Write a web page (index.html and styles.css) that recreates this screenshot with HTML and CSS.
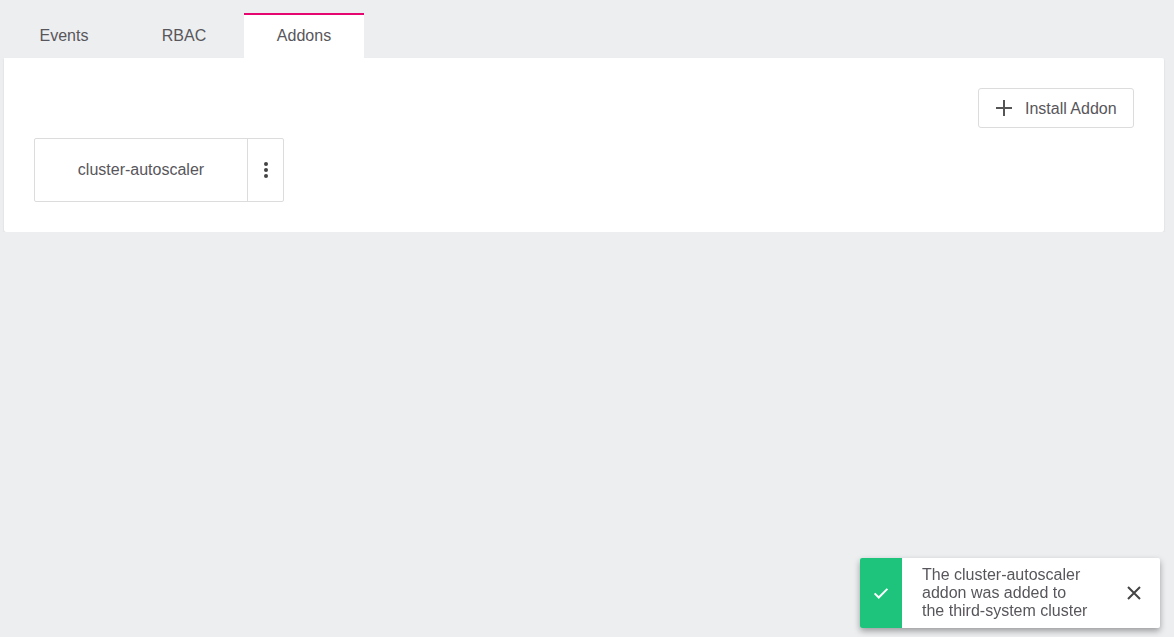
FILE: index.html
```html
<!DOCTYPE html>
<html>
<head>
<meta charset="utf-8">
<link rel="stylesheet" href="styles.css">
</head>
<body>
<div class="page">
  <div class="tabs">
    <div class="tab">Events</div>
    <div class="tab">RBAC</div>
    <div class="tab active">Addons</div>
  </div>
  <div class="card">
    <div class="toolbar">
      <button class="install">
        <svg width="20" height="20" viewBox="0 0 20 20"><path d="M10 2v16M2 10h16" stroke="#555" stroke-width="2" fill="none"/></svg>
        <span>Install Addon</span>
      </button>
    </div>
    <div class="addons">
      <div class="addon">
        <div class="addon-name">cluster-autoscaler</div>
        <div class="addon-menu">
          <svg width="4" height="16" viewBox="0 0 4 16"><circle cx="2" cy="2" r="2" fill="#444"/><circle cx="2" cy="8" r="2" fill="#444"/><circle cx="2" cy="14" r="2" fill="#444"/></svg>
        </div>
      </div>
    </div>
  </div>
</div>
<div class="toast">
  <div class="toast-icon">
    <svg width="18" height="18" viewBox="0 0 24 24"><path d="M3.5 12.5l5.5 5.5 11.5-11.5" stroke="#fff" stroke-width="2.6" fill="none"/></svg>
  </div>
  <div class="toast-text">The cluster-autoscaler addon was added to the third-system cluster</div>
  <div class="toast-close">
    <svg width="14" height="14" viewBox="0 0 14 14"><path d="M1 1l12 12M13 1L1 13" stroke="#444" stroke-width="2" fill="none"/></svg>
  </div>
</div>
</body>
</html>
```
FILE: styles.css
```css
html, body {
  margin: 0;
  padding: 0;
  background: #edeef0;
  font-family: "Liberation Sans", Arial, sans-serif;
  color: #58565b;
}
.page {
  padding: 13px 10px 0 4px;
}
.tabs {
  display: flex;
}
.tab {
  width: 120px;
  height: 45px;
  box-sizing: border-box;
  display: flex;
  align-items: center;
  justify-content: center;
  font-size: 16px;
  color: #58565b;
  border-top: 2px solid transparent;
  padding-bottom: 2px;
}
.tab.active {
  background: #fff;
  border-top-color: #e5066f;
}
.card {
  background: #fff;
  height: 174px;
  box-sizing: border-box;
  padding: 30px 30px;
  border-radius: 0 2px 2px 2px;
  box-shadow: 0 1px 2px rgba(0,0,0,0.12);
}
.toolbar {
  display: flex;
  justify-content: flex-end;
}
.install {
  display: flex;
  align-items: center;
  gap: 11px;
  height: 40px;
  width: 156px;
  box-sizing: border-box;
  padding: 2px 15px 0 15px;
  background: #fff;
  border: 1px solid #dcdcdc;
  border-radius: 3px;
  font-family: inherit;
  font-size: 16px;
  color: #58565b;
  white-space: nowrap;
}
.install svg {
  flex-shrink: 0;
  margin-top: -2px;
}
.addons {
  margin-top: 10px;
  display: flex;
}
.addon {
  display: flex;
  width: 250px;
  height: 64px;
  box-sizing: border-box;
  border: 1px solid #dcdcdc;
  border-radius: 2px;
}
.addon-name {
  width: 212px;
  display: flex;
  align-items: center;
  justify-content: center;
  font-size: 16px;
  color: #58565b;
  border-right: 1px solid #dcdcdc;
}
.addon-menu {
  flex: 1;
  display: flex;
  align-items: center;
  justify-content: center;
}
.toast {
  position: fixed;
  left: 860px;
  top: 558px;
  width: 300px;
  height: 70px;
  display: flex;
  background: #fff;
  border-radius: 2px;
  box-shadow: 0 3px 6px rgba(0,0,0,0.35);
  overflow: hidden;
}
.toast-icon {
  width: 42px;
  background: #1ec47c;
  display: flex;
  align-items: center;
  justify-content: center;
}
.toast-text {
  width: 168px;
  padding-left: 20px;
  font-size: 16px;
  line-height: 18px;
  color: #58565b;
  display: flex;
  align-items: center;
}
.toast-close {
  flex: 1;
  display: flex;
  align-items: center;
  justify-content: center;
  padding-left: 18px;
}
```
